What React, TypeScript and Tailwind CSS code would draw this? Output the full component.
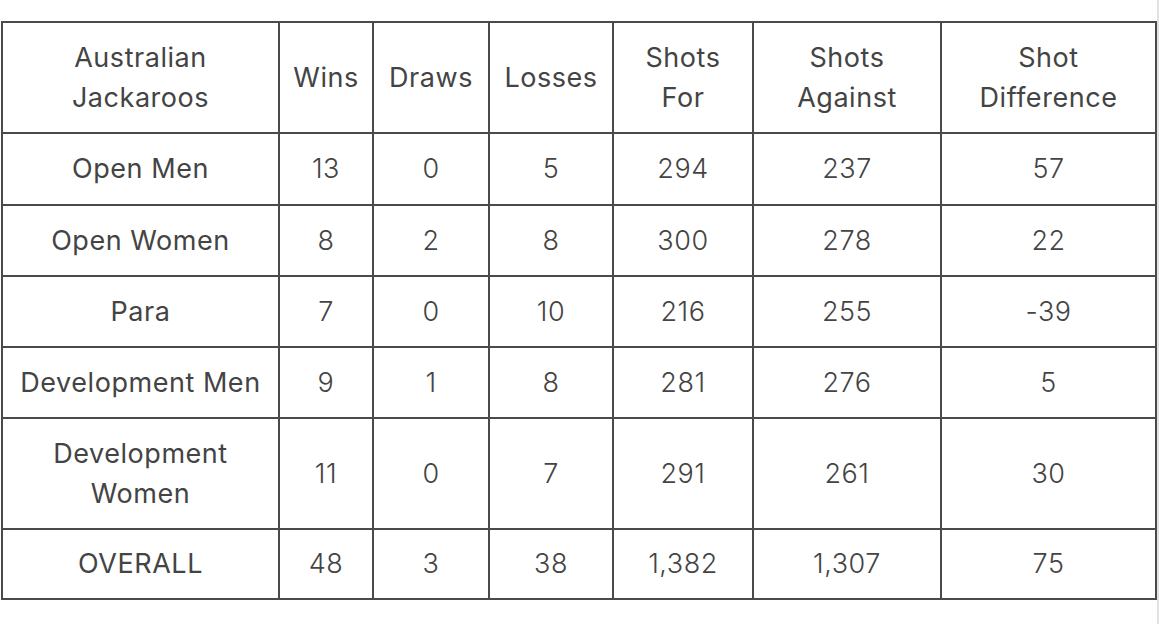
import React from "react";

const rows: { name: string; vals: string[]; h: string }[] = [
  { name: "Open Men", vals: ["13", "0", "5", "294", "237", "57"], h: "h-[72px]" },
  { name: "Open Women", vals: ["8", "2", "8", "300", "278", "22"], h: "h-[71px]" },
  { name: "Para", vals: ["7", "0", "10", "216", "255", "-39"], h: "h-[71px]" },
  { name: "Development Men", vals: ["9", "1", "8", "281", "276", "5"], h: "h-[71px]" },
  { name: "Development Women", vals: ["11", "0", "7", "291", "261", "30"], h: "h-[111px]" },
  { name: "OVERALL", vals: ["48", "3", "38", "1,382", "1,307", "75"], h: "h-[70px]" },
];

const widths = ["w-[277px]", "w-[94px]", "w-[116px]", "w-[124px]", "w-[140px]", "w-[188px]", "w-[215px]"];

export default function App() {
  const cell = "border-2 border-[#4a4a4a] text-center align-middle px-2";
  return (
    <div className="w-[1159px] h-[624px] bg-white flex" style={{ fontFamily: "Inter, 'Noto Sans', sans-serif" }}>
      <div className="w-[1157px] pt-[21px] pl-[1px]">
        <table className="table-fixed border-collapse w-[1156px] text-[27px] tracking-[0.02em] leading-[40px] text-[#444]">
          <colgroup>
            {widths.map((w, i) => (
              <col key={i} className={w} />
            ))}
          </colgroup>
          <thead>
            <tr className="h-[111px]">
              <th className={`${cell} font-normal`}>Australian<br />Jackaroos</th>
              <th className={`${cell} font-normal px-0`}>Wins</th>
              <th className={`${cell} font-normal px-0`}>Draws</th>
              <th className={`${cell} font-normal px-0`}>Losses</th>
              <th className={`${cell} font-normal`}>Shots<br />For</th>
              <th className={`${cell} font-normal`}>Shots<br />Against</th>
              <th className={`${cell} font-normal`}>Shot<br />Difference</th>
            </tr>
          </thead>
          <tbody>
            {rows.map((r) => (
              <tr key={r.name} className={r.h}>
                <td className={`${cell} font-normal px-0`}>
                  {r.name === "Development Women" ? (
                    <>Development<br />Women</>
                  ) : (
                    r.name
                  )}
                </td>
                {r.vals.map((v, i) => (
                  <td key={i} className={`${cell} font-light`}>{v}</td>
                ))}
              </tr>
            ))}
          </tbody>
        </table>
      </div>
      <div className="w-[2px] bg-[#e2e2e2]" />
    </div>
  );
}
